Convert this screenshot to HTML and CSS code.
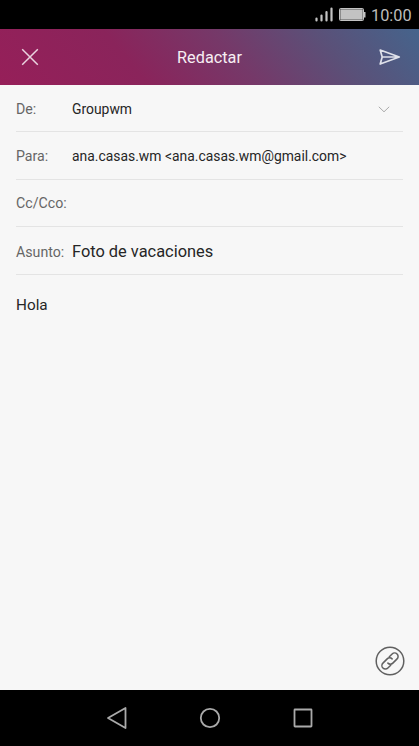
FILE: index.html
```html
<!DOCTYPE html>
<html lang="es">
<head>
<meta charset="utf-8">
<title>Redactar</title>
<link rel="stylesheet" href="styles.css">
</head>
<body>
<div class="screen">
  <div class="status">
    <svg class="signal" width="18" height="15" viewBox="0 0 18 15"><path d="M1.500 11.500V13.500M6.500 8.500V13.500M11.500 5V13.500M16.500 1.500V13.500"/></svg>
    <svg class="battery" width="27" height="13" viewBox="0 0 27 13"><rect x=".5" y=".5" width="24" height="12" rx="1"/><path d="M1.500 1.500H23.500V11.500H1.500ZM25 4H26.500V9.500H25Z"/></svg>
    <span class="clock">10:00</span>
  </div>
  <header class="bar">
    <svg class="close" width="18" height="18" viewBox="0 0 18 18"><path d="M1.200 1.200L16.800 16.800M16.800 1.200L1.200 16.800"/></svg>
    <h1 class="title">Redactar</h1>
    <svg class="send" width="22" height="18" viewBox="0 0 22 18"><path d="M1.200 2L20.300 9L1.200 16L3.200 9ZM3.200 9H20"/></svg>
  </header>
  <main class="form">
    <div class="row"><span class="label">De:</span><span class="value">Groupwm</span>
      <svg class="chevron" width="12" height="7" viewBox="0 0 12 7"><path d="M.8.8L6 5.800L11.200.8"/></svg>
    </div>
    <div class="row recipient"><span class="label">Para:</span><span class="value">ana.casas.wm &lt;ana.casas.wm@gmail.com&gt;</span></div>
    <div class="row recipient"><span class="label">Cc/Cco:</span></div>
    <div class="row subject"><span class="label">Asunto:</span><span class="value">Foto de vacaciones</span></div>
    <div class="message">Hola</div>
    <svg class="attach" width="30" height="30" viewBox="0 0 30 30">
      <circle cx="15" cy="15" r="13.800"/>
      <g transform="rotate(-45 15 15)"><path d="M12.500 18.500H8.500A3.500 3.500 0 0 1 8.500 11.500H14.500A3.500 3.500 0 0 1 18 15"/><path d="M17.500 11.500H21.500A3.500 3.500 0 0 1 21.500 18.500H15.500A3.500 3.500 0 0 1 12 15"/></g>
    </svg>
  </main>
  <nav class="nav">
    <svg width="22" height="24" viewBox="0 0 22 24"><path d="M19.500 2V22L2 12Z"/></svg>
    <svg width="22" height="24" viewBox="0 0 22 24"><circle cx="11" cy="12" r="9.200"/></svg>
    <svg width="22" height="24" viewBox="0 0 22 24"><rect x="2.500" y="3.500" width="17" height="17" rx=".5"/></svg>
  </nav>
</div>
</body>
</html>
```
FILE: styles.css
```css
* {
  box-sizing: border-box;
}

body {
  margin: 0;
  font-family: Roboto, "Liberation Sans", sans-serif;
  background: #000;
}

svg {
  display: block;
  flex: none;
  fill: none;
}

.screen {
  display: flex;
  flex-direction: column;
  width: 419px;
  height: 746px;
}

.status {
  display: flex;
  align-items: center;
  justify-content: flex-end;
  height: 29px;
  padding-right: 7px;
  background: #000;
}

.signal {
  margin-right: 6px;
  stroke: #c3c3c3;
  stroke-width: 2.2;
  stroke-linecap: round;
}

.battery {
  margin-right: 5px;
  fill: #c3c3c3;
}

.battery rect {
  fill: #555;
  stroke: #c3c3c3;
}

.clock {
  width: 41px;
  padding-top: 2px;
  font-size: 16.3px;
  line-height: 20px;
  color: #bdbdbd;
}

.bar {
  display: flex;
  align-items: center;
  justify-content: space-between;
  height: 56px;
  padding: 0 18px 0 21px;
  background: linear-gradient(50deg, #961f59 0%, #8a245b 32%, #753969 56%, #5b5078 77%, #45648c 100%);
}

.close {
  stroke: #ead3df;
  stroke-width: 1.5;
}

.title {
  margin: 2px 0 0 1px;
  font-size: 16.3px;
  font-weight: 400;
  line-height: 20px;
  color: #f7eef3;
}

.send {
  stroke: #dfe1ea;
  stroke-width: 1.7;
  stroke-linejoin: round;
}

.form {
  display: flex;
  flex: 1;
  flex-direction: column;
  padding: 0 16px;
  background: #f7f7f7;
}

.row {
  display: flex;
  align-items: center;
  height: 47.4px;
  padding-top: 2px;
  border-bottom: 1px solid #e4e4e4;
  font-size: 13.9px;
  line-height: 20px;
  color: #262626;
}

.recipient {
  padding-top: 1px;
}

.label {
  width: 56px;
  font-size: 14.2px;
  color: #666;
}

.chevron {
  margin: 0 13px 0 auto;
  stroke: #aaa;
}

.subject {
  padding-top: 3px;
}

.subject .value {
  padding-top: 1px;
  font-size: 16.4px;
}

.message {
  flex: 1;
  padding-top: 20px;
  font-size: 15.3px;
  line-height: 20px;
  color: #262626;
}

.attach {
  align-self: flex-end;
  margin: 0 -2px 14px 0;
  stroke: #606060;
  stroke-width: 1.5;
  stroke-linecap: round;
}

.nav {
  display: flex;
  justify-content: space-between;
  align-items: center;
  height: 56px;
  padding: 0 105px 0 106px;
  background: #000;
  stroke: #aaa;
  stroke-width: 1.8;
  stroke-linejoin: round;
}
```
